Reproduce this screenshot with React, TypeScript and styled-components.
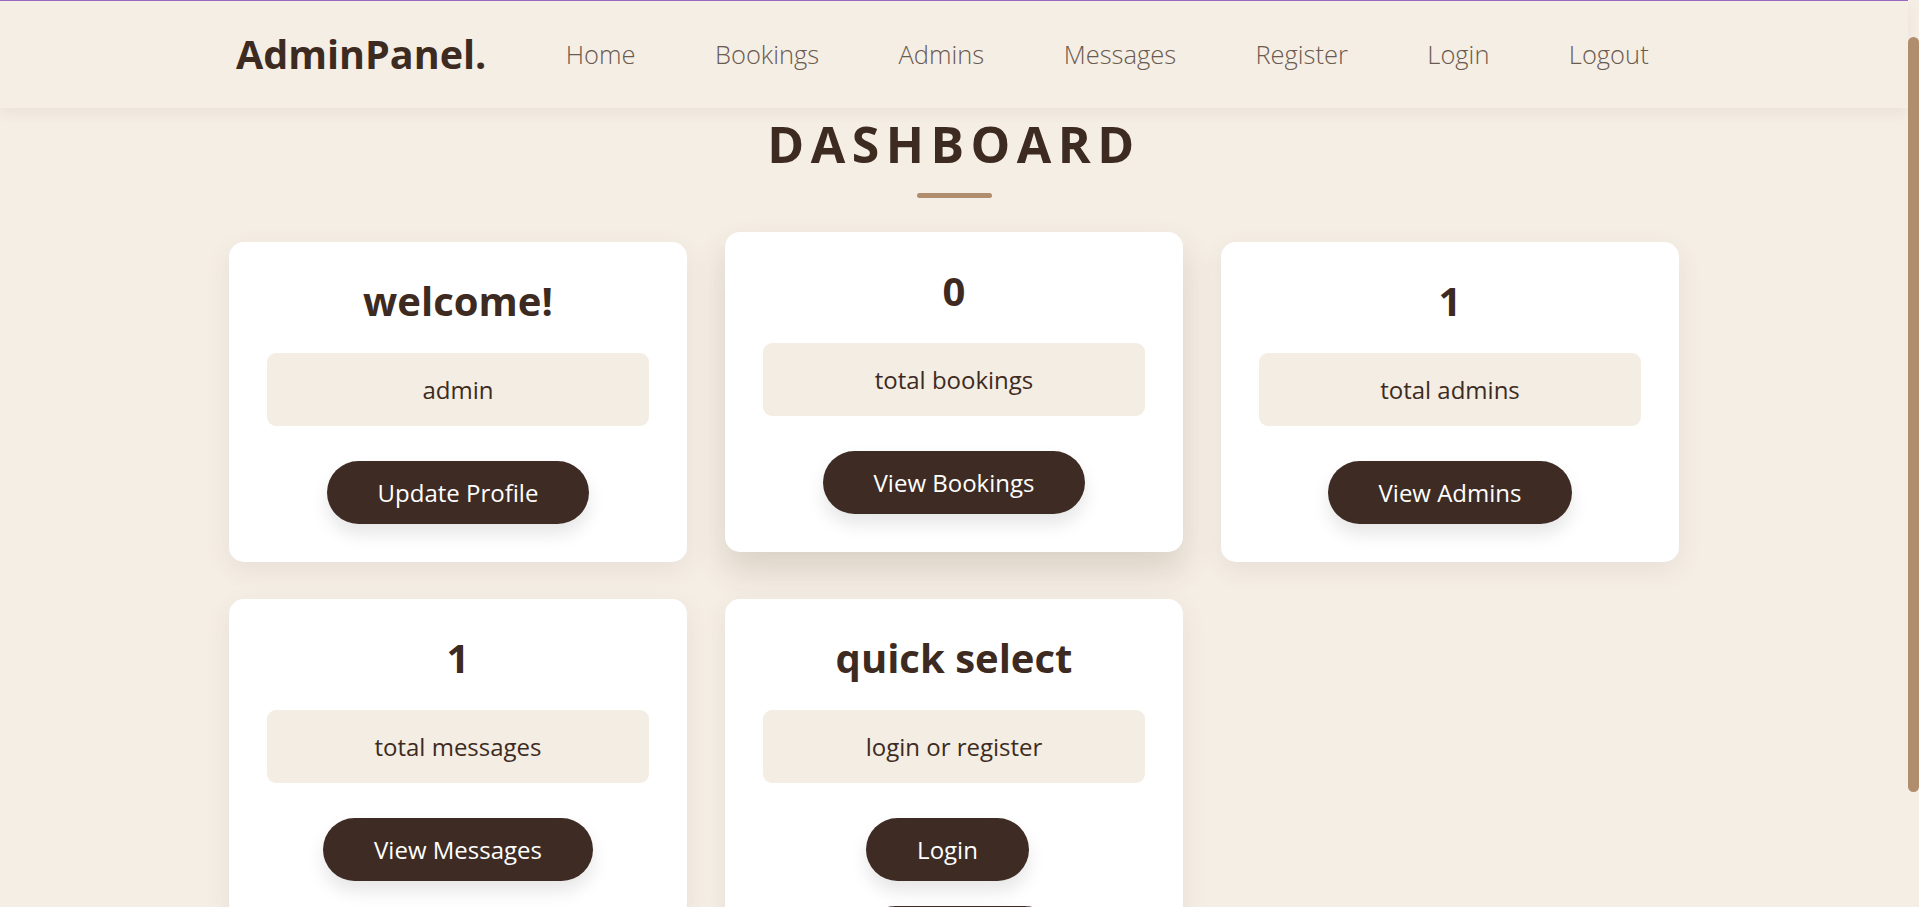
import React from "react";
import styled, { createGlobalStyle } from "styled-components";

const GlobalStyle = createGlobalStyle`
  html {
    background: #f5eee5;
    scrollbar-width: none;
  }
  html::-webkit-scrollbar {
    width: 0;
    height: 0;
  }
  body {
    margin: 0;
    background: #f5eee5;
    font-family: "Open Sans", "Noto Sans", sans-serif;
    color: #3d2b22;
  }
  * {
    box-sizing: border-box;
  }
`;

const Page = styled.div`
  padding-right: 11px;
`;

const ScrollThumb = styled.div`
  position: fixed;
  top: 37px;
  right: 0;
  z-index: 20;
  width: 11px;
  height: 755px;
  border-radius: 6px;
  background: #b08d6c;
`;

const Header = styled.header`
  position: relative;
  z-index: 10;
  height: 108px;
  border-top: 1px solid #9669c4;
  background: #f5eee5;
  box-shadow: 0 6px 12px rgba(90, 70, 40, 0.06);
`;

const HeaderInner = styled.div`
  max-width: 1450px;
  height: 100%;
  margin: 0 auto;
  padding: 1px 7px 0;
  display: flex;
  align-items: center;
`;

const Logo = styled.a`
  font-size: 39.5px;
  line-height: 1;
  font-weight: 700;
  color: #3d2b22;
  text-decoration: none;
`;

const Nav = styled.nav`
  display: flex;
  align-items: center;
`;

const NavLink = styled.a`
  margin-left: 79.4px;
  font-size: 25.5px;
  line-height: 1;
  font-weight: 300;
  color: #6a5a50;
  text-decoration: none;
`;

const Section = styled.section`
  max-width: 1450px;
  margin: 0 auto;
  padding: 11px 0 39px;
  display: flex;
  flex-direction: column;
  align-items: center;
`;

const Heading = styled.h1`
  margin: 0;
  font-size: 50px;
  line-height: 1;
  font-weight: 700;
  letter-spacing: 6.5px;
  text-transform: uppercase;
  color: #3d2b22;
`;

const Underline = styled.span`
  display: block;
  width: 75px;
  height: 5px;
  margin: 24px 0 44px;
  border-radius: 3px;
  background: #b08d6c;
`;

const Grid = styled.div`
  width: 100%;
  display: grid;
  grid-template-columns: repeat(3, 1fr);
  column-gap: 38px;
  row-gap: 37px;
  align-items: start;
`;

const Card = styled.div<{ $lifted?: boolean }>`
  background: #ffffff;
  border-radius: 15px;
  padding: 38px;
  display: flex;
  flex-direction: column;
  align-items: center;
  text-align: center;
  transform: ${(p) => (p.$lifted ? "translateY(-10px)" : "none")};
  box-shadow: ${(p) =>
    p.$lifted
      ? "0 18px 32px rgba(80, 60, 40, 0.16)"
      : "0 8px 26px rgba(80, 60, 40, 0.08)"};
`;

const CardTitle = styled.h3`
  margin: 0 0 32px;
  font-size: 40px;
  line-height: 41px;
  font-weight: 700;
  color: #3d2b22;
`;

const InfoBox = styled.p`
  margin: 0 0 35px;
  width: 100%;
  height: 73px;
  border-radius: 9px;
  background: #f4ede3;
  font-size: 24px;
  line-height: 73px;
  font-weight: 400;
  color: #3d2b22;
`;

const Button = styled.a<{ $offset?: number }>`
  display: inline-block;
  height: 63px;
  padding: 0 51px;
  border-radius: 50px;
  background: #3e2c24;
  color: #ffffff;
  font-size: 24px;
  line-height: 63px;
  font-weight: 500;
  text-decoration: none;
  white-space: nowrap;
  box-shadow: 0 10px 18px rgba(0, 0, 0, 0.1);
  & + & {
    margin-top: 25px;
  }
  margin-left: ${(p) => (p.$offset && p.$offset > 0 ? p.$offset * 2 : 0)}px;
  margin-right: ${(p) => (p.$offset && p.$offset < 0 ? -p.$offset * 2 : 0)}px;
`;

type CardData = {
  title: string;
  info: string;
  buttons: { label: string; offset?: number }[];
  lifted?: boolean;
};

const cards: CardData[] = [
  { title: "welcome!", info: "admin", buttons: [{ label: "Update Profile" }] },
  { title: "0", info: "total bookings", buttons: [{ label: "View Bookings" }], lifted: true },
  { title: "1", info: "total admins", buttons: [{ label: "View Admins" }] },
  { title: "1", info: "total messages", buttons: [{ label: "View Messages" }] },
  {
    title: "quick select",
    info: "login or register",
    buttons: [
      { label: "Login", offset: -6.5 },
      { label: "Register", offset: 6 },
    ],
  },
];

const navItems = ["Home", "Bookings", "Admins", "Messages", "Register", "Login", "Logout"];

export default function App() {
  return (
    <Page>
      <GlobalStyle />
      <Header>
        <HeaderInner>
          <Logo href="#">AdminPanel.</Logo>
          <Nav>
            {navItems.map((n) => (
              <NavLink key={n} href="#">
                {n}
              </NavLink>
            ))}
          </Nav>
        </HeaderInner>
      </Header>
      <Section>
        <Heading>Dashboard</Heading>
        <Underline />
        <Grid>
          {cards.map((c, i) => (
            <Card key={i} $lifted={c.lifted}>
              <CardTitle>{c.title}</CardTitle>
              <InfoBox>{c.info}</InfoBox>
              {c.buttons.map((b) => (
                <Button key={b.label} href="#" $offset={b.offset}>
                  {b.label}
                </Button>
              ))}
            </Card>
          ))}
        </Grid>
      </Section>
      <ScrollThumb aria-hidden="true" />
    </Page>
  );
}
